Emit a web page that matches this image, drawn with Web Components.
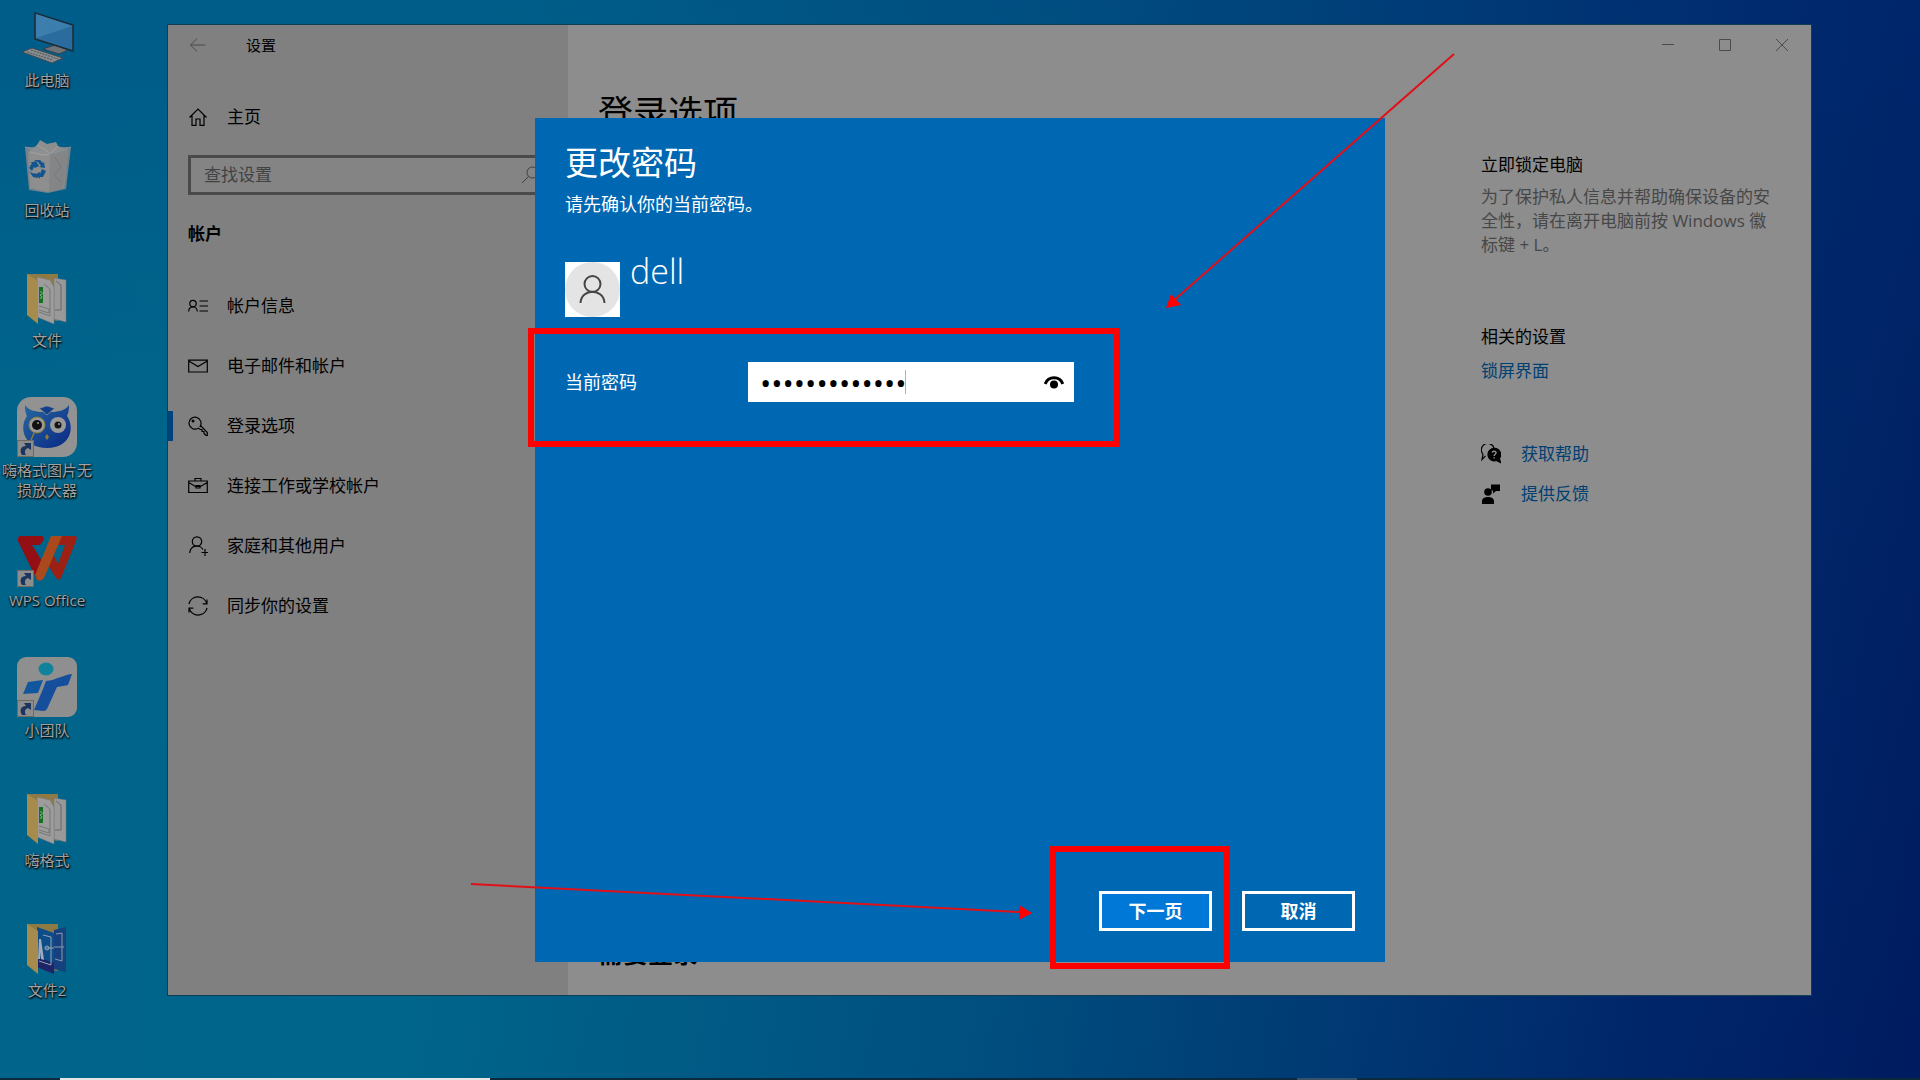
<!DOCTYPE html>
<html lang="zh-CN">
<head>
<meta charset="utf-8">
<title>设置</title>
<style>
    html, body {
        height: 100%;
        margin: 0;
    }
    body {
        font-family: "Open Sans", "Noto Sans CJK SC", sans-serif;
        font-size: 17px;
        line-height: 24px;
        font-variant-ligatures: none;
        overflow: hidden;
    }
</style>
</head>
<body>
<desk-top>
    <desktop-icon slot="icons" icon="pc">此电脑</desktop-icon>
    <desktop-icon slot="icons" icon="bin">回收站</desktop-icon>
    <desktop-icon slot="icons" icon="folder">文件</desktop-icon>
    <desktop-icon slot="icons" icon="owl" shortcut>嗨格式图片无损放大器</desktop-icon>
    <desktop-icon slot="icons" icon="wps" shortcut>WPS Office</desktop-icon>
    <desktop-icon slot="icons" icon="team" shortcut>小团队</desktop-icon>
    <desktop-icon slot="icons" icon="folder">嗨格式</desktop-icon>
    <desktop-icon slot="icons" icon="folder2">文件2</desktop-icon>

    <settings-window slot="window">
        <span slot="title">设置</span>
        <nav-item slot="nav" icon="home">主页</nav-item>
        <search-box slot="nav" placeholder="查找设置"></search-box>
        <nav-group slot="nav" heading="帐户">
            <nav-item icon="info">帐户信息</nav-item>
            <nav-item icon="mail">电子邮件和帐户</nav-item>
            <nav-item icon="key" selected>登录选项</nav-item>
            <nav-item icon="case">连接工作或学校帐户</nav-item>
            <nav-item icon="family">家庭和其他用户</nav-item>
            <nav-item icon="sync">同步你的设置</nav-item>
        </nav-group>
        <span slot="heading">登录选项</span>
        <span slot="section">需要登录</span>
        <side-panel slot="aside"></side-panel>
    </settings-window>

    <password-dialog slot="dialog" user="dell">
        <span slot="title">更改密码</span>
        <span slot="message">请先确认你的当前密码。</span>
        <span slot="next">下一页</span>
        <span slot="cancel">取消</span>
    </password-dialog>

    <mark-layer slot="marks"></mark-layer>
    <task-bar slot="taskbar"></task-bar>
</desk-top>

<script>
const LINE_ICONS = {
    back: `<path d="M2.500 10H17.500M9 3.500L2.500 10L9 16.500"/>`,
    home: `<path d="M1.500 10.500L10 2L18.500 10.500M4 8.500V18.300H8V12H12V18.300H16V8.500"/>`,
    search: `<circle cx="12.500" cy="7.500" r="5.500"/><path d="M8.500 11.500L2 18"/>`,
    info: `<circle cx="5" cy="7.500" r="3.200"/><path d="M0.700 15.500C0.700 9.500 9.300 9.500 9.300 15.500M11.500 5H20M11.500 10H20M11.500 15H20"/>`,
    mail: `<path d="M0.700 4.200H19.300V16H0.700ZM0.700 5L10 10.500L19.300 5"/>`,
    key: `<path d="M11.800 10.800A6 6 0 1 0 10.300 12.200L12.500 13.500H14V15.500H16V17.500L18 19.300H19.300V16.500L12.500 9.500"/><circle cx="5" cy="5" r="0.900" fill="currentColor"/>`,
    case: `<path d="M0.700 5H19.300V16.500H0.700ZM7 5V2.500H13V5M0.700 6.500L7.500 10.500H12.500L19.300 6.500"/><path d="M8 9.500H12V12H8Z"/>`,
    family: `<circle cx="9" cy="5.500" r="4.700"/><path d="M1.700 17C2.500 9 11.500 8 15 13.500M17 13V20M13.500 16.500H20"/>`,
    sync: `<path d="M0.900 8A9.300 9.300 0 0 1 18.800 7.500M19 3.500V7.800H14.700M19.100 12A9.300 9.300 0 0 1 1.200 12.500M1 16.500V12.200H5.300"/>`,
    help: `<path d="M4.500 11.800L1 15.500L2 10.300A6.500 6.500 0 1 1 13 4"/><path d="M13 4.300A6.300 6.300 0 1 0 15.500 16.500L19.500 18.500L18.300 14.500A6.300 6.300 0 0 0 13 4.300Z" fill="currentColor"/><path d="M11.200 8.600C11.600 6.500 15.300 6.800 15 9C14.800 10.300 13.200 10.300 13.200 12M13.200 13.300V14.500" stroke="#8d8d8d" stroke-width="1.500"/>`,
    feedback: `<g fill="currentColor" stroke="none"><circle cx="7" cy="8" r="3.800"/><path d="M1 20V17C1 11.500 13 11.500 13 17V20ZM10 0.500H19V7H15L12 9.500V6.500H10Z"/></g>`,
    min: `<path d="M4 9.500H16"/>`,
    max: `<path d="M4.500 4.500H15.500V15.500H4.500Z"/>`,
    close: `<path d="M4 4L16 16M16 4L4 16"/>`,
};

const lineIcon = (name, width = 1.2) => `
    <svg width="20" height="20" viewBox="0 0 20 20" fill="none" stroke="currentColor" stroke-width="${width}" aria-hidden="true">${LINE_ICONS[name]}</svg>
`;

const folder = (pages) => `
    <path d="M10 7H41V54L21 50L10 48Z" fill="#8f7a43"/>
    ${pages}
    <path d="M10 7L21 14V57L10 48Z" fill="#a68b4c"/>
`;

const DESKTOP_ICONS = {
    pc: `
        <path d="M26 42L38 38L51 43L42 47Z" fill="#6f7376" stroke="#33444f"/>
        <path d="M18 6L56 18V44L18 32Z" fill="#2b6c9e" stroke="#1d2b35" stroke-width="1.500"/>
        <path d="M19 7L55 19L19 31Z" fill="#3c7fae"/>
        <path d="M5 45L15 41L46 51L35 56Z" fill="#898c8e" stroke="#3d4b54"/>
        <path d="M10 45L36 53M14 43L41 52" stroke="#4c565c" stroke-dasharray="2 1"/>`,
    bin: `
        <path d="M8 10L54 10L49 52L31 56L12 53Z" fill="#72818b"/>
        <path d="M11 15L20 8L23 3L30 7L39 5L41 9L51 13L47 51L31 55L13 51Z" fill="#8e8e8e"/>
        <path d="M20 8L27 12L33 17L41 9M13 15L26 18L33 17L48 15" fill="none" stroke="#a2a2a2"/>
        <path d="M33 17L51 13L46 51L32 55Z" fill="#838587"/>
        <path d="M38 20L44 30L37 38L45 46" fill="none" stroke="#75797c"/>
        <path d="M8 10L33 17L54 10" fill="none" stroke="#83949e"/>
        <g fill="#12558f">
            <path d="M16 25L19 24L22 29L18 31L17 30L15 34L12 31L15 26L13 25Z"/>
            <path d="M17 23H23L26 26L27 25L28 31L22 30L24 29L21 25Z"/>
            <path d="M25 32L29 34L26 40H23V42L19 37L23 35V37Z"/>
            <path d="M12 34L15 36L21 37V41L16 40Z"/>
        </g>`,
    folder: folder(`
        <path d="M37 11L49 13V55L37 52Z" fill="#999" stroke="#777" stroke-width="0.500"/>
        <path d="M39 14L44 18V43H38" fill="none" stroke="#666"/>
        <path d="M20 10L33 13L37 20V57L20 50Z" fill="#9c9c9c" stroke="#777" stroke-width="0.500"/>
        <path d="M27 17L33 22V49L22 45M22 39L32 42V46L22 43" fill="none" stroke="#777"/>
        <path d="M22 20H26V36H22Z" fill="#12701f"/>
        <path d="M23 25C26 24 26 28 23 28C26 30 25 32 23 31" fill="none" stroke="#9a9"/>`),
    folder2: folder(`
        <path d="M37 13L49 10V55L37 52Z" fill="#17407f"/>
        <path d="M39 17L45 16V44L38 42M36 30H47" fill="none" stroke="#8a9aaa"/>
        <path d="M20 10L37 16V57L20 50Z" fill="#0c4d8a"/>
        <path d="M20 40L37 46V57L20 50Z" fill="#1d2467"/>
        <path d="M26 18L34 20V48L22 44M28 31H37" fill="none" stroke="#9aa5b0"/>
        <path d="M21 42L22 22H24L27 43L24 42L23 35V42Z" fill="#a2abb3"/>
        <circle cx="30" cy="31" r="2" fill="none" stroke="#9aa5b0"/>`),
    owl: `
        <defs><linearGradient id="g" x1="0" x2="1" y2="1"><stop stop-color="#2668a0"/><stop offset="1" stop-color="#0a2785"/></linearGradient></defs>
        <rect width="60" height="60" rx="14" fill="#929292"/>
        <path d="M8 8C12 14 18 14 23 15H37C42 14 48 14 52 8C52 14 51 17 50 19C58 30 54 51 30 51C6 51 2 30 10 19C9 17 8 14 8 8Z" fill="url(#g)"/>
        <path d="M22 11C26 11 27 9 30 9C33 9 34 11 38 11L30 18Z" fill="#123f8a" stroke="#929292" stroke-width="0.800"/>
        <circle cx="20" cy="28" r="8" fill="#9a9a9a" stroke="#8d7c3a"/>
        <circle cx="20" cy="28" r="5" fill="#111"/>
        <circle cx="41" cy="28" r="8" fill="#9a9a9a"/>
        <circle cx="41" cy="28" r="3.500" fill="#161616"/>
        <circle cx="21" cy="26" r="1" fill="#999"/><circle cx="42" cy="27" r="1" fill="#999"/>
        <path d="M30 37L32 40L30 43L28 40Z" fill="#8d7c3a"/>
        <path d="M17 36L14 43" stroke="#8d7c3a" stroke-width="1.500"/>`,
    wps: `
        <path d="M3 9H25Q28 10 26 14L23 18H15L28 39L23 53H20L1 14Q0 10 3 9Z" fill="#930f14"/>
        <path d="M43 9H58Q61 10 59 14L44 51Q42 54 39 51L31 38L36 27L41 37L48 18H40Z" fill="#9c2013"/>
        <path d="M34 9H45L27 51Q24 55 20 53L18 48Z" fill="#aa4a1c"/>`,
    team: `
        <rect width="60" height="60" rx="9" fill="#8f8f8f"/>
        <ellipse cx="29" cy="12" rx="7.500" ry="6.500" fill="#12829c"/>
        <path d="M11 25L26 23L21 36L6 37Z" fill="#12569e"/>
        <path d="M29 24C40 23 45 18 55 17L51 28C48 29 44 29 40 30L30 52Q29 54 26 54L17 53L26 32Z" fill="#154f9c"/>`,
};

class DeskTop extends HTMLElement {
    constructor() {
        super();
        this.attachShadow({ mode: "open" });
    }
    connectedCallback() {
        this.shadowRoot.innerHTML = `
            <style>
                :host {
                    display: flex;
                    flex-direction: column;
                    height: 100%;
                    position: relative;
                    background:
                        linear-gradient(to bottom, rgba(0, 60, 130, 0.2), rgba(0, 108, 136, 0.05) 40%, rgba(0, 108, 136, 0) 100%),
                        linear-gradient(97deg, #00648b 0%, #00658a 26%, #005180 52%, #003b74 70%, #00266a 86%, #001b60 100%);
                }
                .icons {
                    flex: 1;
                    display: flex;
                    flex-direction: column;
                    width: 94px;
                    padding-top: 7px;
                }
            </style>
            <div class="icons"><slot name="icons"></slot></div>
            <slot name="taskbar"></slot>
            <slot name="window"></slot>
            <slot name="dialog"></slot>
            <slot name="marks"></slot>
        `;
    }
}

class DesktopIcon extends HTMLElement {
    constructor() {
        super();
        this.attachShadow({ mode: "open" });
    }
    connectedCallback() {
        const shortcut = this.hasAttribute("shortcut") ? `
            <rect x="0.500" y="43.500" width="16" height="16" fill="#8d8d8d" stroke="#6f6a62"/>
            <path d="M5 58C2 53 4 49 9 49L7 46H14V53L11 51C8 52 7 55 9 58Z" fill="#1b355e"/>
        ` : "";
        this.shadowRoot.innerHTML = `
            <style>
                :host {
                    display: flex;
                    flex-direction: column;
                    align-items: center;
                    gap: 3px;
                    height: 130px;
                    font-size: 15px;
                    line-height: 20px;
                    color: #a2a2a2;
                    text-align: center;
                    text-shadow: 1px 1px 2px #000, 0 1px 2px #000;
                }
                svg {
                    flex: none;
                }
                span {
                    width: 92px;
                }
            </style>
            <svg width="60" height="60" viewBox="0 0 60 60" aria-hidden="true">
                ${DESKTOP_ICONS[this.getAttribute("icon")]}
                ${shortcut}
            </svg>
            <span><slot></slot></span>
        `;
    }
}

class TaskBar extends HTMLElement {
    constructor() {
        super();
        this.attachShadow({ mode: "open" });
    }
    connectedCallback() {
        this.shadowRoot.innerHTML = `
            <style>
                :host {
                    display: flex;
                    justify-content: space-between;
                    height: 2px;
                    padding: 0 563px 0 60px;
                    background: #0c2a3e;
                }
                .search {
                    width: 430px;
                    background: #e6e6e6;
                }
                .active {
                    width: 60px;
                    background: #37526b;
                }
            </style>
            <div class="search"></div>
            <div class="active"></div>
        `;
    }
}

class SettingsWindow extends HTMLElement {
    constructor() {
        super();
        this.attachShadow({ mode: "open" });
    }
    connectedCallback() {
        this.shadowRoot.innerHTML = `
            <style>
                /* a window placed freely on the desktop */
                :host {
                    position: absolute;
                    top: 25px;
                    right: 109px;
                    bottom: 85px;
                    left: 168px;
                    display: grid;
                    grid-template-columns: 400px 1fr;
                    outline: 1px solid #123c56;
                    color: #000;
                }
                .sidebar {
                    display: flex;
                    flex-direction: column;
                    background: #808080;
                }
                .bar {
                    display: flex;
                    align-items: center;
                    height: 40px;
                    font-size: 15px;
                }
                .sidebar .bar {
                    gap: 38px;
                    padding-left: 20px;
                    margin-bottom: 32px;
                }
                main {
                    display: flex;
                    flex-direction: column;
                    background: #8d8d8d;
                }
                main .bar {
                    justify-content: flex-end;
                    padding-right: 1px;
                }
                button {
                    display: grid;
                    place-items: center;
                    padding: 0;
                    border: 0;
                    background: none;
                    color: #4b4b4b;
                }
                main button {
                    width: 57px;
                    height: 40px;
                }
                .content {
                    flex: 1;
                    display: grid;
                    grid-template-columns: 1fr 300px;
                    padding: 0 30px;
                }
                .column {
                    display: flex;
                    flex-direction: column;
                    justify-content: space-between;
                    padding: 25px 0 25px;
                }
                h1, h2 {
                    margin: 0;
                    font-weight: 400;
                }
                h1 {
                    font-size: 35px;
                    line-height: 46px;
                }
                h2 {
                    font-size: 25px;
                    line-height: 34px;
                    font-weight: 700;
                }
            </style>
            <div class="sidebar">
                <div class="bar">
                    <button aria-label="返回">${lineIcon("back", 1)}</button>
                    <slot name="title"></slot>
                </div>
                <slot name="nav"></slot>
            </div>
            <main>
                <div class="bar">
                    <button aria-label="最小化">${lineIcon("min", 1)}</button>
                    <button aria-label="最大化">${lineIcon("max", 1)}</button>
                    <button aria-label="关闭">${lineIcon("close", 1)}</button>
                </div>
                <div class="content">
                    <div class="column">
                        <h1><slot name="heading"></slot></h1>
                        <h2><slot name="section"></slot></h2>
                    </div>
                    <slot name="aside"></slot>
                </div>
            </main>
        `;
    }
}

class NavItem extends HTMLElement {
    constructor() {
        super();
        this.attachShadow({ mode: "open" });
    }
    connectedCallback() {
        this.shadowRoot.innerHTML = `
            <style>
                :host {
                    display: block;
                }
                a {
                    display: flex;
                    align-items: center;
                    gap: 19px;
                    height: 40px;
                    padding-left: 15px;
                    border-left: 5px solid transparent;
                    color: #000;
                    text-decoration: none;
                }
                :host([selected]) a {
                    height: 30px;
                    border-color: #00437c;
                }
            </style>
            <a href="#">${lineIcon(this.getAttribute("icon"))}<slot></slot></a>
        `;
    }
}

class NavGroup extends HTMLElement {
    constructor() {
        super();
        this.attachShadow({ mode: "open" });
    }
    connectedCallback() {
        this.shadowRoot.innerHTML = `
            <style>
                :host {
                    display: block;
                }
                h2 {
                    margin: 27px 20px 30px;
                    font-size: 17px;
                    line-height: 24px;
                }
                nav {
                    display: grid;
                    grid-auto-rows: 60px;
                    align-items: center;
                }
            </style>
            <h2>${this.getAttribute("heading")}</h2>
            <nav><slot></slot></nav>
        `;
    }
}

class SearchBox extends HTMLElement {
    constructor() {
        super();
        this.attachShadow({ mode: "open" });
    }
    connectedCallback() {
        const placeholder = this.getAttribute("placeholder");
        this.shadowRoot.innerHTML = `
            <style>
                :host {
                    display: flex;
                    align-items: center;
                    box-sizing: border-box;
                    height: 40px;
                    margin: 18px 20px 0;
                    padding: 0 5px 0 13px;
                    border: 3px solid #4a4a4a;
                    background: #848484;
                    color: #3d3d3d;
                }
                input {
                    flex: 1;
                    padding: 0;
                    border: 0;
                    outline: 0;
                    background: none;
                    font: inherit;
                }
                input::placeholder {
                    color: #424242;
                }
            </style>
            <input type="text" placeholder="${placeholder}" aria-label="${placeholder}">
            ${lineIcon("search", 1)}
        `;
    }
}

class SidePanel extends HTMLElement {
    constructor() {
        super();
        this.attachShadow({ mode: "open" });
    }
    connectedCallback() {
        this.shadowRoot.innerHTML = `
            <style>
                :host {
                    display: block;
                    padding-top: 88px;
                }
                h3 {
                    margin: 0;
                    font-size: 17px;
                    font-weight: 400;
                }
                p {
                    margin: 8px 8px 68px 0;
                    color: #474747;
                }
                a {
                    color: #003f72;
                    text-decoration: none;
                }
                .lock {
                    display: block;
                    margin: 10px 0 59px;
                }
                .links {
                    display: grid;
                    gap: 16px;
                }
                .links div {
                    display: flex;
                    align-items: center;
                    gap: 20px;
                }
            </style>
            <h3>立即锁定电脑</h3>
            <p>为了保护私人信息并帮助确保设备的安全性，请在离开电脑前按 Windows 徽标键 + L。</p>
            <h3>相关的设置</h3>
            <a class="lock" href="#">锁屏界面</a>
            <div class="links">
                <div>${lineIcon("help")}<a href="#">获取帮助</a></div>
                <div>${lineIcon("feedback")}<a href="#">提供反馈</a></div>
            </div>
        `;
    }
}

class PasswordDialog extends HTMLElement {
    constructor() {
        super();
        this.attachShadow({ mode: "open" });
    }
    connectedCallback() {
        this.shadowRoot.innerHTML = `
            <style>
                /* modal layer, the box sits in the middle of the screen */
                :host {
                    position: absolute;
                    inset: 0;
                    display: grid;
                    place-items: center;
                    color: #fff;
                    font-size: 18px;
                }
                form {
                    display: flex;
                    flex-direction: column;
                    box-sizing: border-box;
                    width: 850px;
                    max-width: 100%;
                    min-height: 844px;
                    padding: 23px 30px 31px;
                    background: #0067b3;
                }
                h1 {
                    margin: 0 0 7px;
                    font-size: 33px;
                    font-weight: 400;
                    line-height: 44px;
                }
                p {
                    margin: 0 0 34px;
                }
                .user {
                    display: flex;
                    gap: 10px;
                    margin-bottom: 45px;
                    font-size: 34px;
                    font-weight: 300;
                    line-height: 42px;
                }
                .user svg {
                    margin-top: 12px;
                }
                .field {
                    display: grid;
                    grid-template-columns: 183px 326px;
                    align-items: center;
                }
                .box {
                    display: flex;
                    align-items: center;
                    position: relative;
                    height: 40px;
                    padding: 0 10px 0 12px;
                    background: #fff;
                }
                input {
                    flex: 1;
                    min-width: 0;
                    height: 40px;
                    padding: 0;
                    border: 0;
                    outline: 0;
                    background: none;
                    color: #000;
                    font-family: "Open Sans", sans-serif;
                    font-size: 30px;
                }
                .caret {
                    position: absolute;
                    top: 8px;
                    left: 157px;
                    width: 1px;
                    height: 24px;
                    background: #b0b0b0;
                }
                button {
                    font: inherit;
                    color: inherit;
                }
                .eye {
                    display: grid;
                    padding: 0;
                    border: 0;
                    background: none;
                    color: #000;
                }
                footer {
                    display: flex;
                    justify-content: flex-end;
                    gap: 30px;
                    margin-top: auto;
                }
                footer button {
                    width: 113px;
                    height: 40px;
                    padding: 0;
                    border: 3px solid #fff;
                    background: none;
                    font-weight: 700;
                }
                footer .primary {
                    background: #0078d7;
                }
            </style>
            <form>
                <h1><slot name="title"></slot></h1>
                <p><slot name="message"></slot></p>
                <div class="user">
                    <svg width="55" height="55" viewBox="0 0 55 55" aria-hidden="true">
                        <rect width="55" height="55" fill="#fff"/>
                        <circle cx="27.500" cy="27.500" r="27.500" fill="#e4e4e4"/>
                        <g fill="none" stroke="#454545" stroke-width="2"><circle cx="27.500" cy="22" r="8"/><path d="M15.500 41C16.500 26 38.500 26 39.500 41"/></g>
                    </svg>
                    <span>${this.getAttribute("user")}</span>
                </div>
                <div class="field">
                    <label for="password">当前密码</label>
                    <div class="box">
                        <input id="password" type="password" value="1234567890123">
                        <span class="caret"></span>
                        <button class="eye" type="button" aria-label="显示密码">
                            <svg width="20" height="14" viewBox="0 0 20 14"><path d="M1.200 9C4 0.500 16 0.500 18.800 9" fill="none" stroke="currentColor" stroke-width="3"/><circle cx="10" cy="9.500" r="4" fill="currentColor"/></svg>
                        </button>
                    </div>
                </div>
                <footer>
                    <button class="primary" type="button"><slot name="next"></slot></button>
                    <button type="button"><slot name="cancel"></slot></button>
                </footer>
            </form>
        `;
    }
}

class MarkLayer extends HTMLElement {
    constructor() {
        super();
        this.attachShadow({ mode: "open" });
    }
    connectedCallback() {
        this.shadowRoot.innerHTML = `
            <style>
                :host {
                    position: absolute;
                    inset: 0;
                    pointer-events: none;
                }
                svg {
                    display: block;
                    width: 100%;
                    height: 100%;
                }
            </style>
            <svg viewBox="0 0 1920 1080" fill="none" stroke="#f00" aria-hidden="true">
                <rect x="531" y="331" width="586" height="113" stroke-width="6"/>
                <rect x="1053" y="849" width="174" height="117" stroke-width="6"/>
                <path d="M1454 54L1172 302M471 884L1020 912" stroke="#e01018" stroke-width="2"/>
                <path d="M1166 308L1171 294L1181 305ZM1032 913L1019 905L1019 920Z" fill="#f00" stroke="none"/>
            </svg>
        `;
    }
}

customElements.define("desk-top", DeskTop);
customElements.define("desktop-icon", DesktopIcon);
customElements.define("task-bar", TaskBar);
customElements.define("settings-window", SettingsWindow);
customElements.define("nav-item", NavItem);
customElements.define("nav-group", NavGroup);
customElements.define("search-box", SearchBox);
customElements.define("side-panel", SidePanel);
customElements.define("password-dialog", PasswordDialog);
customElements.define("mark-layer", MarkLayer);
</script>
</body>
</html>
